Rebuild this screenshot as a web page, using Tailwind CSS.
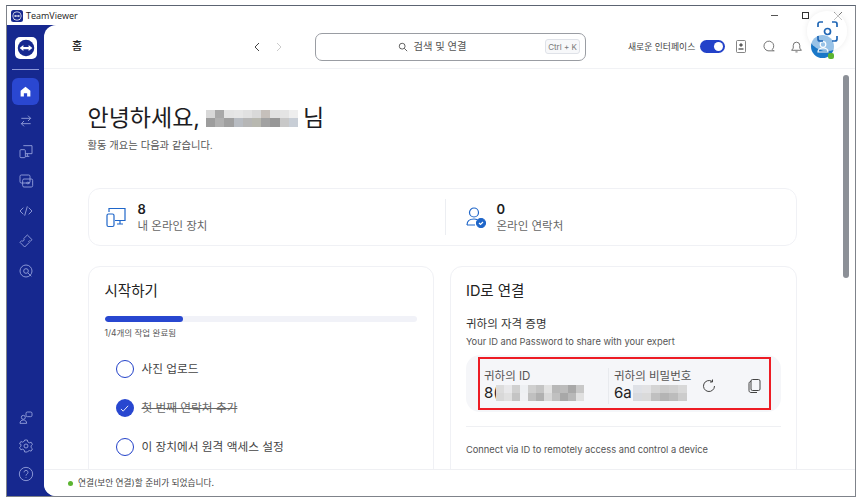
<!DOCTYPE html>
<html lang="ko">
<head>
    <meta charset="utf-8">
    <title>TeamViewer</title>
    <script src="https://cdn.jsdelivr.net/npm/@tailwindcss/browser@4"></script>
</head>

<body class="bg-white font-['Inter','Noto_Sans_CJK_KR',sans-serif] overflow-hidden">
    <div class="w-[863px] h-[502px] pt-[5px] pl-[6px]">
        <div class="relative w-[850px] h-[492px] border-[1.5px] border-[#7f838a] border-t-[#5c6472] flex flex-col overflow-hidden">

            <!-- Title bar -->
            <div class="h-[19px] shrink-0 flex items-center pl-[4px] bg-white">
                <svg class="w-[12px] h-[12px]" viewBox="0 0 24 24"><rect width="24" height="24" rx="5" fill="#16288f"/><circle cx="12" cy="12" r="9" fill="#fff"/><circle cx="12" cy="12" r="7.5" fill="#16288f"/><path d="M6 12l3-2.5v1.5h6V9.500l3 2.500-3 2.500V13H9v1.500z" fill="#fff"/></svg>
                <span class="ml-[3px] text-[9px] text-[#222] font-['Open_Sans','Noto_Sans',sans-serif]">TeamViewer</span>
                <div class="ml-auto flex items-center">
                    <span class="w-[7px] h-[1.5px] bg-[#555] mr-[24px]"></span>
                    <span class="w-[7px] h-[7px] border border-[#333] mr-[25px]"></span>
                    <svg class="w-[8px] h-[8px] mr-[13px]" viewBox="0 0 8 8" stroke="#555" stroke-width=".8"><path d="M0 0l8 8M8 0L0 8"/></svg>
                </div>
            </div>

            <div class="flex-1 flex bg-[#16288f] min-h-0">
                <!-- Sidebar -->
                <aside class="w-[37px] shrink-0 flex flex-col items-center text-[#9aa6de]">
                    <div class="mt-[12px] w-[22px] h-[22px] bg-white rounded-[5px] flex items-center justify-center">
                        <svg class="w-[18px] h-[18px]" viewBox="0 0 24 24"><circle cx="12" cy="12" r="11" fill="#16288f"/><path d="M3.500 12l5-4v2.500h7V8l5 4-5 4v-2.500h-7V16z" fill="#fff"/></svg>
                    </div>
                    <div class="mt-[10px] w-[27px] h-px bg-[#8d98d8]"></div>
                    <div class="mt-[8px] w-[27px] h-[27px] rounded-[6px] bg-[#2a47d1] flex items-center justify-center">
                        <svg class="w-[13px] h-[13px]" viewBox="0 0 24 24" fill="#fff"><path d="M12 3l9 7.500V21h-6v-6H9v6H3V10.500z"/></svg>
                    </div>
                    <div class="mt-[8px] flex flex-col gap-[14px]">
                        <svg class="w-[16px] h-[16px]" viewBox="0 0 24 24" fill="none" stroke="currentColor" stroke-width="1.300"><path d="M5 8h14M15 4l4 4-4 4M19 16H5M9 12l-4 4 4 4"/></svg>
                        <svg class="w-[16px] h-[16px]" viewBox="0 0 24 24" fill="none" stroke="currentColor" stroke-width="1.300"><path d="M8 4h13v12H11M14 16v4M11 20h6"/><rect x="3" y="10" width="8" height="12" rx="1.500"/></svg>
                        <svg class="w-[16px] h-[16px]" viewBox="0 0 24 24" fill="none" stroke="currentColor" stroke-width="1.300"><rect x="3" y="3" width="15" height="12" rx="2"/><rect x="7" y="9" width="15" height="12" rx="2"/><path d="M12 15h5M15 13l2 2-2 2"/></svg>
                        <svg class="w-[16px] h-[16px]" viewBox="0 0 24 24" fill="none" stroke="currentColor" stroke-width="1.300"><path d="M8 7l-5 5 5 5M16 7l5 5-5 5M14 5l-4 14"/></svg>
                        <svg class="w-[16px] h-[16px]" viewBox="0 0 24 24" fill="none" stroke="currentColor" stroke-width="1.300"><path d="M14 3l7 7-2.500 2.500-1-1-1.500 1.500 1 1L10 21l-7-7 2.500-2.500a2 2 0 0 0 3-3z"/></svg>
                        <svg class="w-[16px] h-[16px]" viewBox="0 0 24 24" fill="none" stroke="currentColor" stroke-width="1.300"><circle cx="12" cy="12" r="9"/><circle cx="12" cy="12" r="3.500"/><path d="M15 15l5 5"/></svg>
                    </div>
                    <div class="mt-auto mb-[14px] flex flex-col gap-[12px]">
                        <svg class="w-[16px] h-[16px]" viewBox="0 0 24 24" fill="none" stroke="currentColor" stroke-width="1.300"><rect x="12" y="3" width="9" height="7" rx="2"/><circle cx="8" cy="11" r="3"/><path d="M3 20c0-3 2-5 5-5s5 2 5 5z"/></svg>
                        <svg class="w-[16px] h-[16px]" viewBox="0 0 24 24" fill="none" stroke="currentColor" stroke-width="1.300"><circle cx="12" cy="12" r="3"/><path d="M10 3h4l.6 2.800 2.400 1.400 2.700-.9 2 3.400-2.100 1.900v2.800l2.100 1.900-2 3.400-2.700-.9-2.400 1.400L14 21h-4l-.6-2.800L7 16.800l-2.700.9-2-3.400 2.100-1.900v-2.800L2.300 8.700l2-3.400 2.700.9 2.400-1.400z"/></svg>
                        <svg class="w-[16px] h-[16px]" viewBox="0 0 24 24" fill="none" stroke="currentColor" stroke-width="1.300"><circle cx="12" cy="12" r="10"/><path d="M9 9.500a3 3 0 1 1 4.500 2.600c-1 .6-1.500 1.200-1.500 2.400M12 17v1"/></svg>
                    </div>
                </aside>

                <!-- Main -->
                <main class="flex-1 min-w-0 bg-white rounded-tl-[12px] rounded-bl-[12px] flex flex-col overflow-hidden">
                    <header class="h-[44px] shrink-0 flex items-center border-b border-[#f1f2f5] pl-[28px]">
                        <span class="w-[180px] text-[11px] font-medium text-[#222]">홈</span>
                        <svg class="w-[10px] h-[10px]" viewBox="0 0 10 10" fill="none" stroke="#444" stroke-width="1"><path d="M7 1L3 5l4 4"/></svg>
                        <svg class="ml-[12px] w-[10px] h-[10px]" viewBox="0 0 10 10" fill="none" stroke="#ccc" stroke-width="1"><path d="M3 1l4 4-4 4"/></svg>
                        <div class="ml-[31px] w-[271px] h-[28px] border border-[#9a9da3] rounded-[7px] flex items-center pr-[5px]">
                            <div class="flex-1 flex items-center justify-center gap-[5px] pl-[4px] text-[10.300px] text-[#555]">
                                <svg class="w-[10px] h-[10px]" viewBox="0 0 24 24" fill="none" stroke="#555" stroke-width="2.200"><circle cx="10" cy="10" r="7"/><path d="M15 15l7 7"/></svg>
                                <span>검색 및 연결</span>
                            </div>
                            <span class="w-[35px] h-[15px] border border-[#dfe2e8] bg-[#f7f8fa] rounded-[3px] text-[8px] text-[#777] flex items-center justify-center">Ctrl + K</span>
                        </div>
                        <span class="ml-[42px] text-[8.800px] text-[#444] whitespace-nowrap">새로운 인터페이스</span>
                        <span class="ml-[5px] w-[25px] h-[13px] rounded-full bg-[#2342c9] flex items-center justify-end pr-[2px]"><span class="w-[9px] h-[9px] rounded-full bg-white"></span></span>
                        <svg class="ml-[10px] w-[12px] h-[13px]" viewBox="0 0 12 13" fill="none" stroke="#666" stroke-width=".8"><rect x="1.500" y=".5" width="9" height="12" rx="1"/><circle cx="6" cy="5" r="1.300" fill="#555"/><path d="M3.500 9h5" stroke-width="1.400"/></svg>
                        <svg class="ml-[15px] w-[13px] h-[13px]" viewBox="0 0 24 24" fill="none" stroke="#555" stroke-width="1.500"><path d="M19 17.500A9 9 0 1 0 11 20h12M19 17.500l2 2.500"/></svg>
                        <svg class="ml-[15px] w-[13px] h-[13px]" viewBox="0 0 24 24" fill="none" stroke="#555" stroke-width="1.500"><path d="M3 19h18l-3-4V10a6 6 0 0 0-12 0v5zM10 22h4"/></svg>
                    </header>

                    <div class="flex-1 min-h-0 overflow-hidden pl-[43.500px] pr-[58.500px] pt-[36px]">
                        <h1 class="flex items-center h-[26px] text-[23px] leading-none text-[#1c1c22]">
                            <span>안녕하세요,</span>
                            <span class="mosaic ml-[6px] w-[92px] h-[17px]" data-cols="10" data-pix="d8d8d8,a9a9a9,e4e4e4,e6e6e6,e1e1e1,d9d9d9,c6c0bb,e2e2e2,e4e4e4,eeeeee,9d9d9d,b0b0b0,a0a0a0,b8bcc2,b6b6b6,b8b8b0,a2a2a2,979797,c8c8c8,c8ced6"></span>
                            <span class="ml-[5px]">님</span>
                        </h1>
                        <p class="mt-[7px] text-[10.300px] text-[#555]">활동 개요는 다음과 같습니다.</p>

                        <section class="mt-[35px] h-[58px] border border-[#f0f1f5] rounded-[12px] flex items-center pl-[17px]">
                            <svg class="w-[20px] h-[22px] text-[#1f66c9]" viewBox="0 0 20 22" fill="none" stroke="currentColor" stroke-width="1.200"><path d="M3 6V2.500h16v12H9M14 15v3M11 18h6"/><rect x="1" y="8" width="7" height="12.500" rx="1.500"/></svg>
                            <div class="ml-[12px] w-[307px]">
                                <div class="text-[13px] leading-[16px] font-semibold text-[#1c1c22]">8</div>
                                <div class="mt-px text-[11.500px] leading-[16px] text-[#666]">내 온라인 장치</div>
                            </div>
                            <div class="w-px h-[36px] bg-[#eceef2]"></div>
                            <svg class="ml-[20px] w-[20px] h-[21px] text-[#1f66c9]" viewBox="0 0 20 21" fill="none" stroke="currentColor" stroke-width="1.200"><circle cx="8" cy="5.500" r="4.500"/><path d="M1 18c0-4 3-6 7-6 1.500 0 2.500.3 3.500.8M1 18h8"/><circle cx="15" cy="16" r="4.500" fill="currentColor"/><path d="M13 16l1.500 1.500L17 15" stroke="#fff"/></svg>
                            <div class="ml-[11px]">
                                <div class="text-[13px] leading-[16px] font-semibold text-[#1c1c22]">0</div>
                                <div class="mt-px text-[11.500px] leading-[16px] text-[#666]">온라인 연락처</div>
                            </div>
                        </section>

                        <div class="mt-[20px] grid grid-cols-2 gap-[16px]">
                            <section class="h-[240px] border border-[#f0f1f5] rounded-[12px] pl-[16px] pr-[16px] pt-[15px]">
                                <h2 class="text-[14.500px] leading-[18px] text-[#222]">시작하기</h2>
                                <div class="mt-[16px] h-[6px] rounded-full bg-[#f1f2f8] overflow-hidden"><div class="w-1/4 h-full rounded-full bg-[#2847d0]"></div></div>
                                <p class="mt-[5px] text-[8.500px] leading-[12px] text-[#555]">1/4개의 작업 완료됨</p>
                                <ul class="mt-[21px] pl-[11px] flex flex-col gap-[21px] text-[11.700px] text-[#444]">
                                    <li class="flex items-center h-[18px] gap-[8px]"><span class="w-[18px] h-[18px] rounded-full border-[1.500px] border-[#2342c9]"></span>사진 업로드</li>
                                    <li class="flex items-center h-[18px] gap-[8px]"><span class="w-[18px] h-[18px] rounded-full bg-[#2847d0] flex items-center justify-center"><svg class="w-[9px] h-[9px]" viewBox="0 0 10 10" fill="none" stroke="#fff" stroke-width="1"><path d="M1 5.500l2.500 2.500L9 2"/></svg></span><span class="line-through text-[#666]">첫 번째 연락처 추가</span></li>
                                    <li class="flex items-center h-[18px] gap-[8px]"><span class="w-[18px] h-[18px] rounded-full border-[1.500px] border-[#2342c9]"></span>이 장치에서 원격 액세스 설정</li>
                                </ul>
                            </section>

                            <section class="h-[240px] border border-[#f0f1f5] rounded-[12px] pl-[15px] pr-[15px] pt-[15px]">
                                <h2 class="text-[14.500px] leading-[18px] text-[#222]">ID로 연결</h2>
                                <h3 class="mt-[17px] text-[11.500px] leading-[14px] text-[#333]">귀하의 자격 증명</h3>
                                <p class="mt-[4px] text-[9.300px] leading-[14px] text-[#555]">Your ID and Password to share with your expert</p>
                                <div class="relative mt-[6px] h-[57px] rounded-[14px] bg-[#f5f6f9] flex items-center pl-[18px] pt-[4px]">
                                    <div class="w-[124px]">
                                        <div class="text-[11.500px] leading-[14px] text-[#555]">귀하의 ID</div>
                                        <div class="flex items-center h-[20px] text-[15px] text-[#222]">8(<span class="mosaic ml-[-3px] w-[88px] h-[16px]" data-cols="11" data-pix="dcdcdc,e8e8ea,d0d0d0,eef0f3,cfcfcf,c4c4c4,e2e2e2,b8b8b8,bcbcbc,a8a8a8,c8c8c8,d8d8d8,e0e0e0,c4c4c4,f0f1f4,c0c0c0,b0b0b0,d8d8d8,c0c0c0,a8a8a8,b8b8b8,e0e0e0"></span></div>
                                    </div>
                                    <div class="w-px h-[36px] bg-[#e8eaee]"></div>
                                    <div class="ml-[5px] w-[78px]">
                                        <div class="text-[11.500px] leading-[14px] text-[#555] whitespace-nowrap">귀하의 비밀번호</div>
                                        <div class="flex items-center h-[20px] text-[15px] text-[#222]">6a<span class="mosaic ml-[1px] w-[54px] h-[16px]" data-cols="6" data-pix="dfe1e6,e2e2e4,d4d4d4,cccccc,d0d0d0,d8d8d8,d8dade,dadada,c0c0c0,b4b4b4,bcbcbc,cccccc"></span></div>
                                    </div>
                                    <svg class="ml-[10px] w-[14px] h-[14px]" viewBox="0 0 14 14" fill="none" stroke="#444" stroke-width="1"><path d="M12.500 7A5.500 5.500 0 1 1 10 2.400M10.500 .5v2.500H8"/></svg>
                                    <svg class="ml-[32px] w-[13px] h-[14px]" viewBox="0 0 13 14" fill="none" stroke="#444" stroke-width="1"><rect x="3" y=".5" width="9" height="11" rx="1.500"/><path d="M3 2.500C1.500 2.500 1 3.500 1 4.500v7c0 1.200.8 2 2 2h6"/></svg>
                                    <!-- Red highlight drawn over the panel -->
                                    <div class="absolute left-[12px] top-[2px] w-[293px] h-[53px] border-2 border-[#ed1c24]"></div>
                                </div>
                                <div class="mt-[14px] h-px bg-[#eff0f3]"></div>
                                <p class="mt-[16px] text-[9.300px] leading-[14px] text-[#555]">Connect via ID to remotely access and control a device</p>
                            </section>
                        </div>
                    </div>

                    <footer class="h-[27px] shrink-0 border-t border-[#eff0f3] bg-white flex items-center pl-[24px] text-[8.700px] text-[#444]">
                        <span class="w-[5px] h-[5px] rounded-full bg-[#5cb531]"></span>
                        <span class="ml-[5px] mt-[2px]">연결(보안 연결)할 준비가 되었습니다.</span>
                    </footer>
                </main>
            </div>

            <!-- Scrollbar thumb -->
            <div class="absolute left-[836px] top-[69px] w-[6px] h-[203px] rounded-full bg-[#8c9097]"></div>

            <!-- Avatar -->
            <div class="absolute left-[804px] top-[29px] w-[23px] h-[23px] rounded-full bg-[#1a78c9] flex items-center justify-center">
                <svg class="w-[14px] h-[14px]" viewBox="0 0 14 14" fill="none" stroke="#fff" stroke-width="1.200"><circle cx="7" cy="4.500" r="2.800"/><path d="M2 12c0-3 2-4 5-4s5 1 5 4z"/></svg>
            </div>
            <span class="absolute left-[821px] top-[47px] w-[6px] h-[6px] bg-[#5cb531] rounded-[2px]"></span>

            <!-- Floating capture button -->
            <div class="absolute left-[800px] top-[5px] w-[40px] h-[40px] rounded-full bg-white/55 shadow-[0_0_6px_rgba(0,0,0,0.08)] flex items-center justify-center">
                <svg class="w-[21px] h-[21px]" viewBox="0 0 21 21" fill="none" stroke="#1f66b5" stroke-width="1.700"><path d="M1 6V3a2 2 0 0 1 2-2h3M15 1h3a2 2 0 0 1 2 2v3M20 15v3a2 2 0 0 1-2 2h-3M6 20H3a2 2 0 0 1-2-2v-3"/><circle cx="10.500" cy="10.500" r="3"/></svg>
            </div>
        </div>
    </div>

    <script>
        // Pixelated blur over private values
        document.querySelectorAll('.mosaic').forEach(function (box) {
            let cols = Number(box.dataset.cols);
            box.style.display = 'grid';
            box.style.gridTemplateColumns = 'repeat(' + cols + ', 1fr)';
            box.dataset.pix.split(',').forEach(function (color) {
                let cell = document.createElement('span');
                cell.style.background = '#' + color;
                box.appendChild(cell);
            });
        });
    </script>
</body>
</html>
